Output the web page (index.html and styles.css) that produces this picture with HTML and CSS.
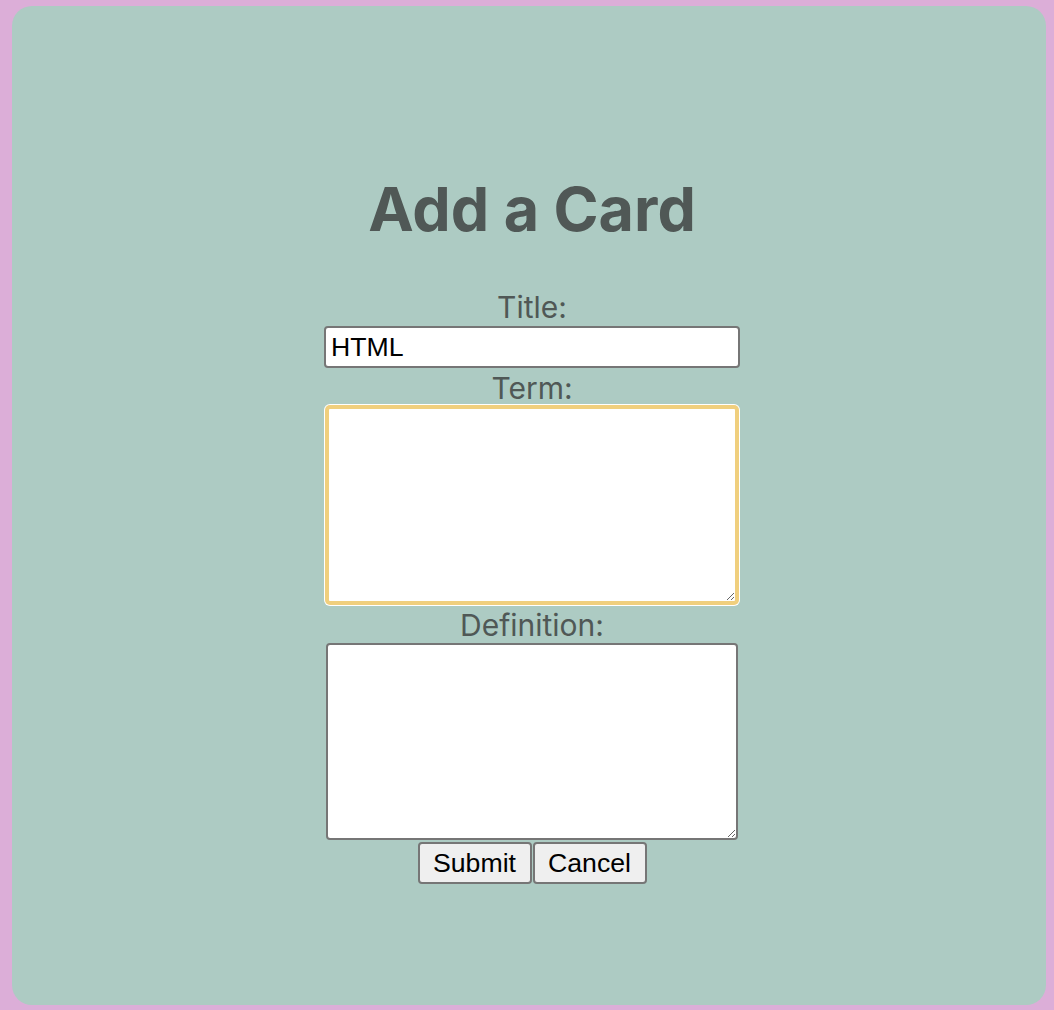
FILE: index.html
```html
<!DOCTYPE html>
<html lang="en">
<head>
<meta charset="utf-8">
<title>Add a Card</title>
<link rel="stylesheet" href="styles.css">
</head>
<body>
<div class="page">
  <main class="card">
    <h1 class="heading">Add a Card</h1>
    <form class="card-form">
      <label class="field-label" for="title">Title:</label>
      <input class="text-input" id="title" type="text" value="HTML">
      <label class="field-label" for="term">Term:</label>
      <textarea class="area area-term area-focused" id="term"></textarea>
      <label class="field-label field-label-def" for="definition">Definition:</label>
      <textarea class="area area-def" id="definition"></textarea>
      <div class="actions">
        <button class="btn" type="submit">Submit</button><button class="btn" type="button">Cancel</button>
      </div>
    </form>
  </main>
</div>
</body>
</html>
```
FILE: styles.css
```css
html, body {
  margin: 0;
  padding: 0;
}
body {
  background: #dcaed8;
  font-family: "Inter", "Liberation Sans", sans-serif;
}
.page {
  padding: 6px 8px 5px 12px;
  height: 1010px;
  box-sizing: border-box;
}
.card {
  background: #adcbc3;
  border-radius: 20px;
  height: 999px;
  box-sizing: border-box;
  padding: 164px 0 0 6px;
  display: flex;
  flex-direction: column;
  align-items: center;
}
.heading {
  margin: 0 0 41px 0;
  font-family: "Inter", sans-serif;
  font-weight: 700;
  font-size: 61px;
  line-height: 78px;
  color: #505856;
}
.card-form {
  display: flex;
  flex-direction: column;
  align-items: center;
}
.field-label {
  display: block;
  font-family: "Inter", sans-serif;
  font-size: 30px;
  line-height: 36px;
  height: 36px;
  color: #505856;
}
.field-label-def {
  margin-top: 3px;
}
.text-input {
  box-sizing: border-box;
  width: 416px;
  height: 42px;
  margin: 1px 0 2px 0;
  padding: 0 5px;
  border: 2px solid #767676;
  border-radius: 4px;
  background: #fff;
  font-family: "Liberation Sans", Arial, sans-serif;
  font-size: 26.67px;
  color: #000;
  outline: none;
}
.area {
  box-sizing: border-box;
  width: 412px;
  border: 2px solid #767676;
  border-radius: 4px;
  background: #fff;
  padding: 4px;
  font-family: "Liberation Sans", Arial, sans-serif;
  font-size: 26.67px;
  display: block;
  outline: none;
  margin: 0;
}
.area-term {
  height: 198px;
}
.area-focused {
  border: 3px solid #f0cf7e;
  box-shadow: 0 0 0 1px #f0cf7e, 0 0 0 2px #ffffff;
}
.area-def {
  height: 197px;
}
.actions {
  display: flex;
  margin-top: 2px;
  gap: 1px;
}
.btn {
  box-sizing: border-box;
  width: 114px;
  height: 42px;
  padding: 0;
  border: 2px solid #767676;
  border-radius: 4px;
  background: #efefef;
  font-family: "Liberation Sans", Arial, sans-serif;
  font-size: 26.67px;
  color: #000;
}
```
